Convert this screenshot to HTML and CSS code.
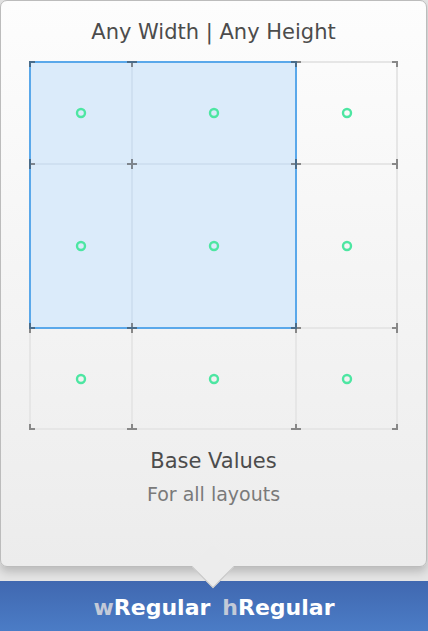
FILE: index.html
```html
<!DOCTYPE html>
<html lang="en">
<head>
    <meta charset="UTF-8">
    <meta name="viewport" content="width=device-width, initial-scale=1.0">
    <title>Size Classes</title>
    <link rel="stylesheet" href="styles.css">
</head>
<body>
    <div class="page">
        <div class="popover">
            <h1 class="title">Any Width | Any Height</h1>

            <!-- 3x3 size class grid, drawn in page coordinates -->
            <svg class="grid" width="372" height="372" viewBox="28 60 372 372">
                <defs>
                    <clipPath id="gridclip"><rect x="29" y="61" width="369" height="369"/></clipPath>
                </defs>
                <g stroke="#e6e6e6" stroke-width="2" fill="none">
                    <rect x="30" y="62" width="367" height="367"/>
                    <line x1="132" y1="62" x2="132" y2="429"/>
                    <line x1="296" y1="62" x2="296" y2="429"/>
                    <line x1="30" y1="164" x2="397" y2="164"/>
                    <line x1="30" y1="328" x2="397" y2="328"/>
                </g>
                <rect x="30" y="62" width="266" height="266" fill="#dbebfa"/>
                <g stroke="#cfe0f1" stroke-width="2">
                    <line x1="132" y1="62" x2="132" y2="328"/>
                    <line x1="30" y1="164" x2="296" y2="164"/>
                </g>
                <rect x="30" y="62" width="266" height="266" fill="none" stroke="#5aa8ea" stroke-width="2"/>
                <g fill="none" stroke="#4de6a2" stroke-width="2.4">
                    <circle cx="81" cy="113" r="4"/>
                    <circle cx="214" cy="113" r="4"/>
                    <circle cx="347" cy="113" r="4"/>
                    <circle cx="81" cy="246" r="4"/>
                    <circle cx="214" cy="246" r="4"/>
                    <circle cx="347" cy="246" r="4"/>
                    <circle cx="81" cy="379" r="4"/>
                    <circle cx="214" cy="379" r="4"/>
                    <circle cx="347" cy="379" r="4"/>
                </g>
                <g id="ticks" clip-path="url(#gridclip)" stroke="#3c3c3c" stroke-width="2" opacity="0.55"></g>
            </svg>

            <div class="caption">
                <div class="caption-main">Base Values</div>
                <div class="caption-sub">For all layouts</div>
            </div>
            <div class="arrow"></div>
        </div>

        <div class="bar">
            <span class="dim">w</span>Regular<span class="dim gap">h</span>Regular
        </div>
    </div>

    <script>
        // tick marks at every grid crossing
        var xs = [30, 132, 296, 397];
        var ys = [62, 164, 328, 429];
        var g = document.getElementById("ticks");
        var ns = "http://www.w3.org/2000/svg";
        for (var i = 0; i < xs.length; i++) {
            for (var j = 0; j < ys.length; j++) {
                var h = document.createElementNS(ns, "line");
                h.setAttribute("x1", xs[i] - 5); h.setAttribute("x2", xs[i] + 5);
                h.setAttribute("y1", ys[j]); h.setAttribute("y2", ys[j]);
                var v = document.createElementNS(ns, "line");
                v.setAttribute("x1", xs[i]); v.setAttribute("x2", xs[i]);
                v.setAttribute("y1", ys[j] - 5); v.setAttribute("y2", ys[j] + 5);
                g.appendChild(h);
                g.appendChild(v);
            }
        }
    </script>
</body>
</html>
```

FILE: styles.css
```css
*{margin: 0;padding: 0;box-sizing: border-box;}

body{background: #e4e4e4;font-family: "DejaVu Sans", "Liberation Sans", sans-serif;}

.page{width: 428px;height: 631px;display: flex;flex-direction: column;overflow: hidden;}

.popover{position: relative;width: 427px;height: 567px;border: 1px solid #bcbcbc;border-radius: 7px;
    background: linear-gradient(#fdfdfd, #ececec);box-shadow: 0 5px 9px rgba(0,0,0,0.18);
    display: flex;flex-direction: column;padding-top: 18px;z-index: 1;}

.title{font-size: 21px;line-height: 26px;font-weight: normal;color: #4c4c4c;text-align: center;}

.grid{display: block;margin: 15px 0 0 27px;}

.caption{text-align: center;margin-top: 16px;}
.caption-main{font-size: 21px;line-height: 26px;color: #4c4c4c;}
.caption-sub{font-size: 19px;line-height: 24px;color: #7a7a7a;margin-top: 8px;}

.arrow{position: absolute;left: 197px;bottom: -16px;width: 30px;height: 30px;transform: rotate(45deg);
    background: #ececec;border-right: 1px solid #c4c4c4;border-bottom: 1px solid #c4c4c4;}

.bar{margin-top: 14px;height: 50px;padding-top: 3px;line-height: 47px;text-align: center;
    background: linear-gradient(#4068b0, #4b7cc6);color: #fff;font-size: 22px;font-weight: bold;}
.dim{color: #c3cad8;}
.gap{margin-left: 12px;}
```
